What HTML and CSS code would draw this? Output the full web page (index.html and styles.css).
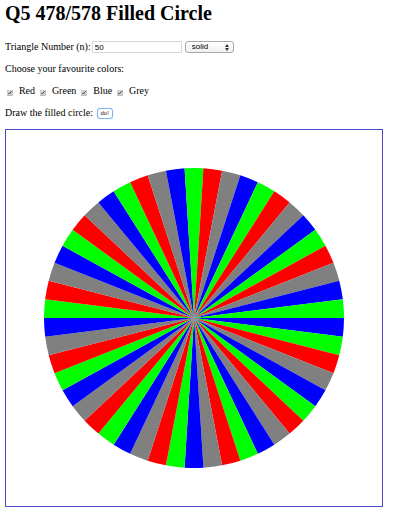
FILE: index.html
```html
<!DOCTYPE html>
<html>
<head>
<meta charset="utf-8">
<title>Q5 478/578 Filled Circle</title>
<link rel="stylesheet" href="styles.css">
</head>
<body>
<h1 class="title">Q5 478/578 Filled Circle</h1>
<p class="row">Triangle Number (n):<input class="num" type="text" value="50"><span class="sel-wrap"><select class="sel"><option>solid</option><option>outline</option></select></span></p>
<p class="row">Choose your favourite colors:</p>
<p class="row checks">
  <input class="cb" type="checkbox" checked><span class="lbl">Red</span>
  <input class="cb" type="checkbox" checked><span class="lbl">Green</span>
  <input class="cb" type="checkbox" checked><span class="lbl">Blue</span>
  <input class="cb" type="checkbox" checked><span class="lbl">Grey</span>
</p>
<p class="row">Draw the filled circle: <button class="btn" type="button">do!</button></p>
<canvas id="cv" class="canvas" width="376" height="376"></canvas>
<script src="script.js"></script>
</body>
</html>
```

FILE: styles.css
```css
body {
  margin: 0 5px;
  font-family: "Liberation Serif", "Times New Roman", serif;
  color: #000;
  background: #fff;
}
.title {
  font-size: 20px;
  font-weight: bold;
  line-height: 24px;
  margin: 1px 0 16px;
}
.row {
  font-size: 10px;
  line-height: 12px;
  margin: 10px 0;
  white-space: nowrap;
}
.num {
  box-sizing: border-box;
  width: 90px;
  height: 12px;
  margin: 0 0 0 1px;
  padding: 0 2px;
  border: 1px solid #d6d6d6;
  font-family: "Liberation Sans", Arial, sans-serif;
  font-size: 8px;
  vertical-align: top;
  color: #000;
  outline: none;
}
.sel-wrap {
  position: relative;
  display: inline-block;
  margin-left: 3px;
  vertical-align: top;
}
.sel-wrap::before,
.sel-wrap::after {
  content: "";
  position: absolute;
  right: 5px;
  width: 0;
  height: 0;
  border-left: 2px solid transparent;
  border-right: 2px solid transparent;
  pointer-events: none;
}
.sel-wrap::before {
  top: 3px;
  border-bottom: 3px solid #333;
}
.sel-wrap::after {
  top: 7px;
  border-top: 3px solid #333;
}
.sel {
  -webkit-appearance: none;
  appearance: none;
  box-sizing: border-box;
  width: 49px;
  height: 12px;
  margin: 0;
  padding: 0 0 0 6px;
  border: 1px solid #a9a9a9;
  border-radius: 3px;
  background: linear-gradient(#ffffff, #f0f0f0);
  font-family: "Liberation Sans", Arial, sans-serif;
  font-size: 8px;
  line-height: 10px;
  color: #000;
  display: block;
}
.checks {
  display: flex;
  align-items: baseline;
}
.cb {
  margin: 0 12px 0 4px;
  zoom: 0.48;
  accent-color: #d4d4d4;
  align-self: flex-end;
  position: relative;
  top: -2px;
}
.lbl {
  margin-right: 3px;
}
.btn {
  box-sizing: border-box;
  height: 11px;
  margin: 1px 0 0 1px;
  padding: 0 3px;
  border: 1px solid #7eb2f2;
  border-radius: 3px;
  background: #fff;
  box-shadow: 0 0 1px #a9ccf7;
  font-family: "Liberation Sans", Arial, sans-serif;
  font-size: 6px;
  line-height: 9px;
  color: #222;
  vertical-align: top;
}
.canvas {
  display: block;
  border: 1px solid #4b4bc8;
}
```

FILE: script.js
```js
(function () {
  var cv = document.getElementById('cv');
  var ctx = cv.getContext('2d');
  var n = 50;
  var cx = 188, cy = 188, r = 150;
  var colors = ['#0000ff', '#00ff00', '#ff0000', '#808080'];
  var step = Math.PI * 2 / n;
  for (var i = 0; i < n; i++) {
    ctx.beginPath();
    ctx.moveTo(cx, cy);
    ctx.arc(cx, cy, r, i * step, (i + 1) * step, false);
    ctx.closePath();
    ctx.fillStyle = colors[i % 4];
    ctx.fill();
  }
})();
```
